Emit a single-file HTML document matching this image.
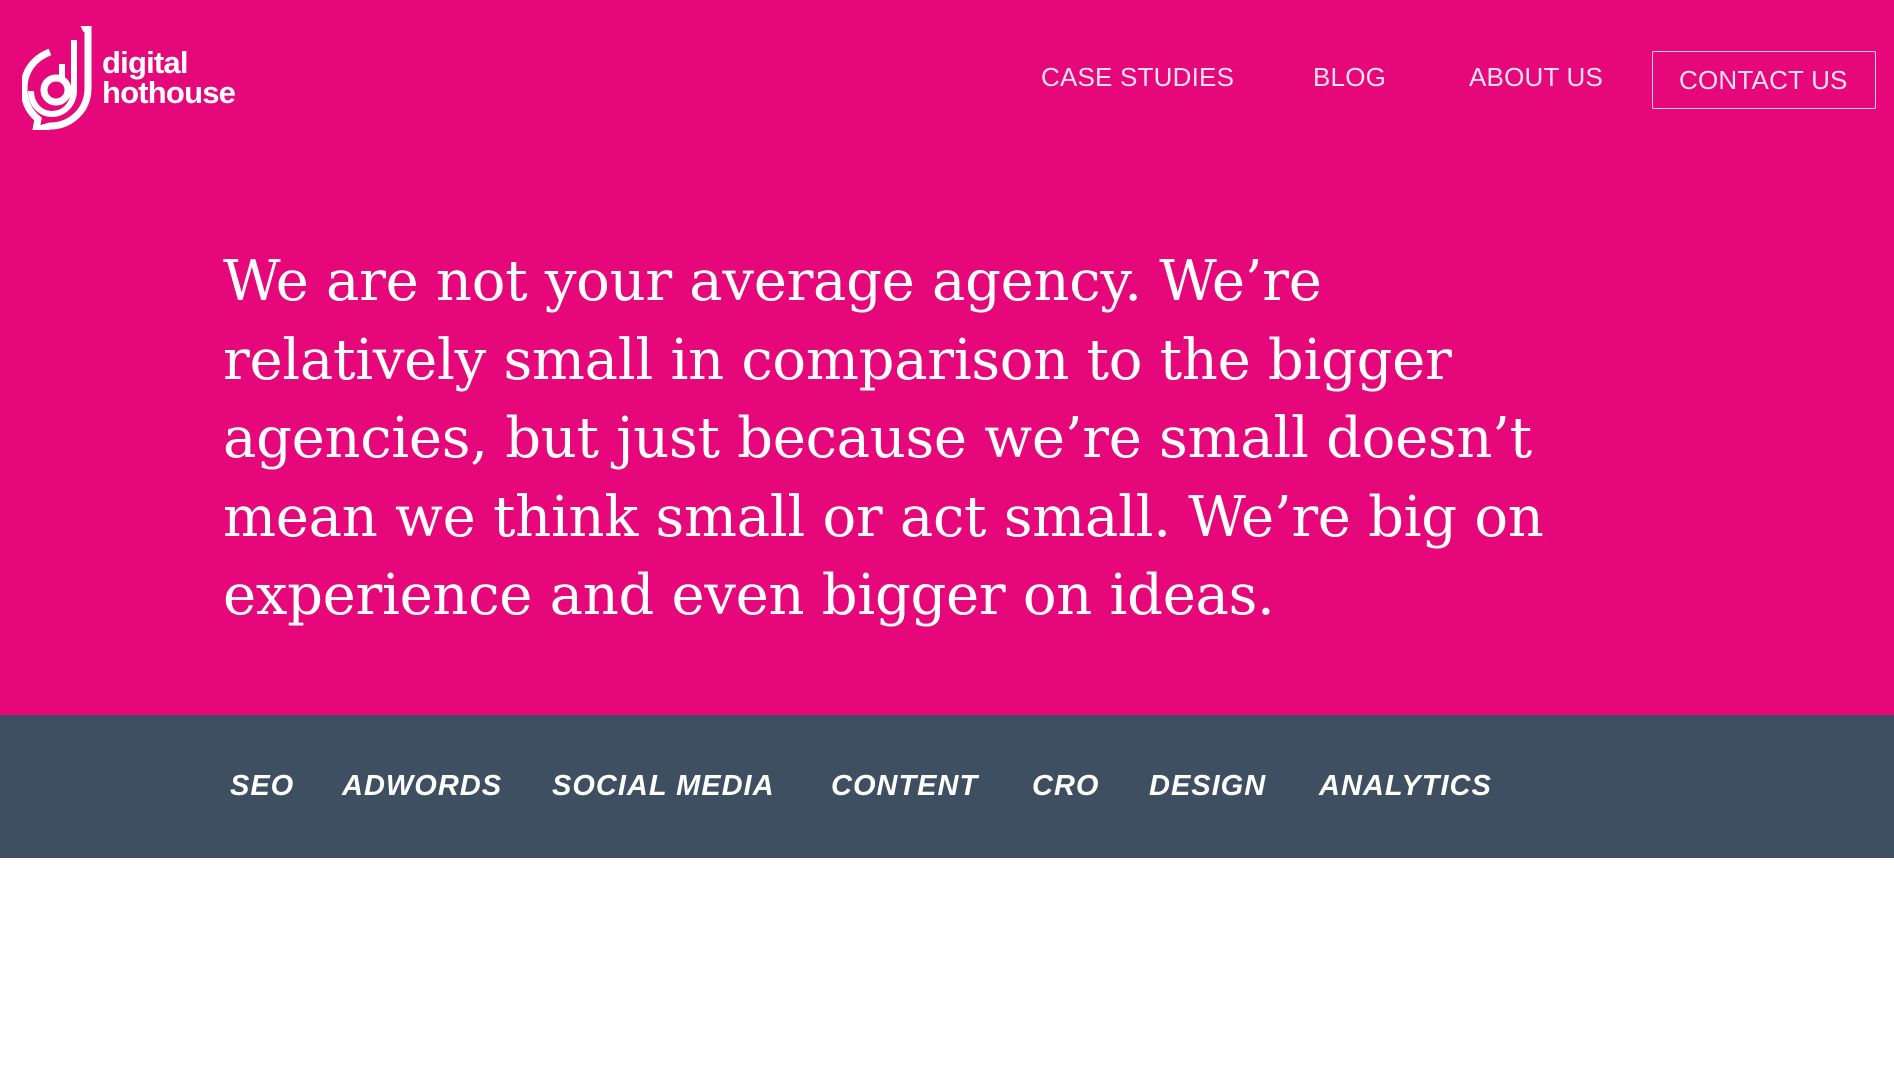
<!DOCTYPE html>
<html><head><meta charset="utf-8"><style>
*{margin:0;padding:0;box-sizing:border-box}
body{width:1894px;height:1065px;background:#fff;overflow:hidden;font-family:"Liberation Sans",sans-serif}
.hero{position:absolute;left:0;top:0;width:1894px;height:715px;background:#e6077a}
.band{position:absolute;left:0;top:715px;width:1894px;height:143px;background:#3d4f61}
.nav{position:absolute;top:60px;color:#fbe0ee;font-size:26px;letter-spacing:0.2px;white-space:nowrap;line-height:34px}
.btn{position:absolute;left:1652px;top:51px;width:224px;height:58px;border:1.5px solid #f7cfe3;border-radius:2px}
.h{position:absolute;left:223px;top:243px;color:#fff;font-family:"DejaVu Serif","Liberation Serif",serif;font-size:56px;line-height:78.5px;white-space:nowrap;letter-spacing:-0.3px}
.tag{position:absolute;top:767px;color:#fff;font-weight:bold;font-style:italic;font-size:29px;letter-spacing:1px;white-space:nowrap;line-height:38px}
.logo{position:absolute;left:102px;color:#fff;font-weight:bold;font-size:31px;letter-spacing:-0.8px;line-height:1}
</style></head><body>
<div class="hero">
<svg style="position:absolute;left:22px;top:26px" width="70" height="104" viewBox="0 0 70 104">
<path d="M60 3 L66 0 L66 62 C66 85 48 100 28 100 L14 104 L16 93 C6 85 2 74 2 62 C2 45 12 32 28 26" fill="none" stroke="#fff" stroke-width="7"/>
<path d="M52 14 L52 64 C52 78 42 88 30 88 C18 88 9 78 9 65" fill="none" stroke="#fff" stroke-width="6"/>
<circle cx="34" cy="64" r="12" fill="none" stroke="#fff" stroke-width="7"/>
<path d="M40 38 L40 52" stroke="#fff" stroke-width="6"/>
</svg>
<div class="logo" style="top:47px">digital</div>
<div class="logo" style="top:77px">hothouse</div>
<div class="nav" style="left:1041px">CASE STUDIES</div>
<div class="nav" style="left:1313px">BLOG</div>
<div class="nav" style="left:1469px">ABOUT US</div>
<div class="btn"></div>
<div class="nav" style="left:1679px;top:63px">CONTACT US</div>
<div class="h">We are not your average agency. We’re<br>relatively small in comparison to the bigger<br>agencies, but just because we’re small doesn’t<br>mean we think small or act small. We’re big on<br>experience and even bigger on ideas.</div>
</div>
<div class="band"></div>
<div class="tag" style="left:230px">SEO</div>
<div class="tag" style="left:342px">ADWORDS</div>
<div class="tag" style="left:552px">SOCIAL MEDIA</div>
<div class="tag" style="left:831px">CONTENT</div>
<div class="tag" style="left:1032px">CRO</div>
<div class="tag" style="left:1149px">DESIGN</div>
<div class="tag" style="left:1319px">ANALYTICS</div>
</body></html>
